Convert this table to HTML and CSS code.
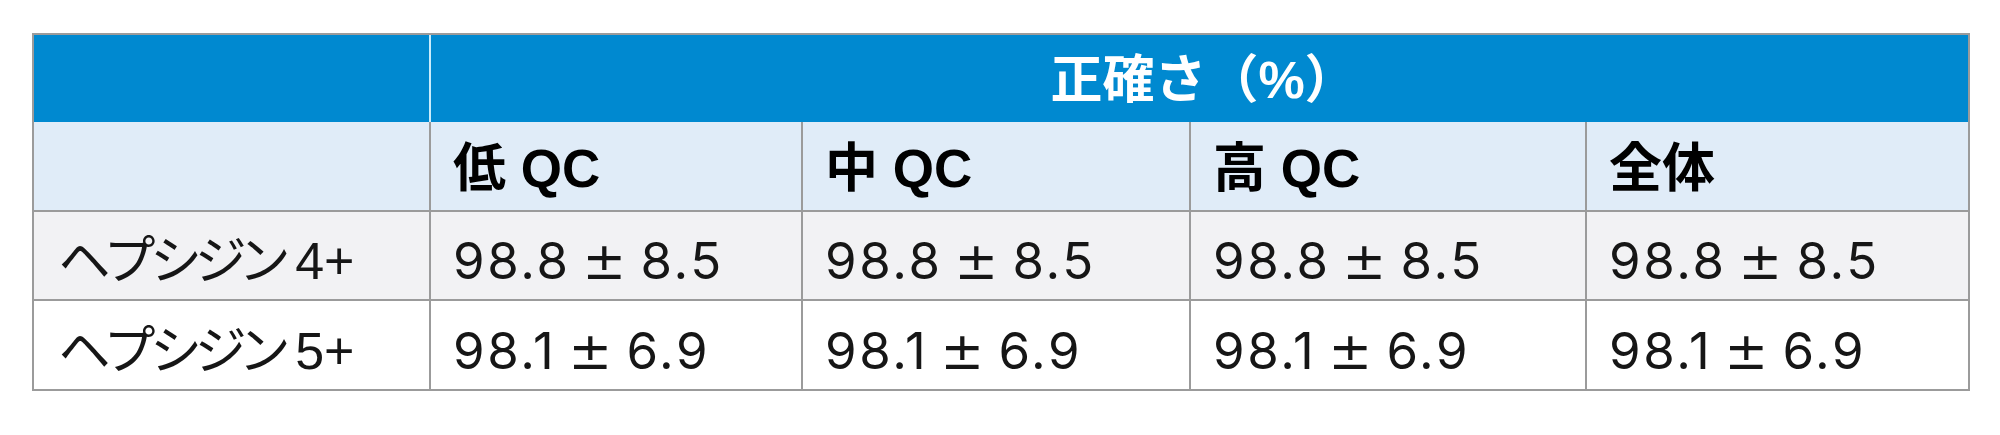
FILE: index.html
```html
<!DOCTYPE html>
<html lang="ja">
<head>
<meta charset="utf-8">
<title>正確さ</title>
<link rel="stylesheet" href="styles.css">
</head>
<body>
<table class="acc">
  <colgroup>
    <col class="c1"><col class="c2"><col class="c3"><col class="c4"><col class="c5">
  </colgroup>
  <thead>
    <tr class="h1">
      <th class="blank"></th>
      <th class="title" colspan="4">正確さ（%）</th>
    </tr>
    <tr class="h2">
      <th></th>
      <th>低 QC</th>
      <th>中 QC</th>
      <th>高 QC</th>
      <th>全体</th>
    </tr>
  </thead>
  <tbody>
    <tr class="r odd">
      <td class="name"><span class="kana">ヘプシジン</span> 4+</td>
      <td>98.8 <span class="pm">±</span> 8.5</td>
      <td>98.8 <span class="pm">±</span> 8.5</td>
      <td>98.8 <span class="pm">±</span> 8.5</td>
      <td>98.8 <span class="pm">±</span> 8.5</td>
    </tr>
    <tr class="r even last">
      <td class="name"><span class="kana">ヘプシジン</span> 5+</td>
      <td>98.1 <span class="pm">±</span> 6.9</td>
      <td>98.1 <span class="pm">±</span> 6.9</td>
      <td>98.1 <span class="pm">±</span> 6.9</td>
      <td>98.1 <span class="pm">±</span> 6.9</td>
    </tr>
  </tbody>
</table>
</body>
</html>
```
FILE: styles.css
```css
html, body {
  margin: 0;
  padding: 0;
  background: #ffffff;
}
body {
  padding: 33px 0 0 32px;
  font-family: "Liberation Sans", "Noto Sans CJK JP", sans-serif;
  color: #111111;
}
.acc {
  border-collapse: separate;
  border-spacing: 0;
  table-layout: fixed;
  width: 1938px;
  border: 2px solid #9b9b9b;
}
.c1 { width: 397px; }
.c2 { width: 372px; }
.c3 { width: 388px; }
.c4 { width: 396px; }
.c5 { width: 381px; }

.acc th, .acc td {
  padding: 0 0 0 22px;
  text-align: left;
  vertical-align: middle;
  border-right: 2px solid #9b9b9b;
  border-bottom: 2px solid #9b9b9b;
  white-space: nowrap;
}
.acc tr > :last-child { border-right: none; }
.acc tr.last > * { border-bottom: none; }

.h1 { height: 87px; }
.h1 th {
  background: #0089d0;
  border-bottom: none;
  color: #ffffff;
}
.h1 .blank { border-right: 2px solid #c9ecfb; }
.h1 .title {
  text-align: center;
  padding: 3px 0 0 8px;
  font-size: 52px;
  line-height: 52px;
  font-weight: 700;
}

.h2 { height: 90px; }
.h2 th {
  background: #e0ecf8;
  padding-top: 5px;
  font-size: 53px;
  line-height: 53px;
  font-weight: 700;
  color: #000000;
}

.r { height: 89px; }
.r.last { height: 88px; }
.r td {
  padding-top: 10px;
  font-family: "Inter", "Liberation Sans", "Noto Sans CJK JP", sans-serif;
  font-size: 51px;
  line-height: 51px;
  font-weight: 400;
  letter-spacing: 2.6px;
  word-spacing: -2px;
  color: #161616;
}
.r.odd td { background: #f2f2f4; }
.r.even td { background: #ffffff; }

.pm {
  font-family: "DejaVu Sans", sans-serif;
  font-size: 52px;
  line-height: 0;
  margin: 0 -3px;
}

.r td.name {
  padding-left: 24px;
  padding-top: 11px;
  font-family: "Liberation Sans", "Noto Sans CJK JP", sans-serif;
  font-size: 52px;
  line-height: 52px;
  letter-spacing: 0;
  word-spacing: -3px;
}
.kana {
  font-family: "Noto Sans CJK JP", sans-serif;
  font-size: 52px;
  line-height: 0;
  font-feature-settings: "palt";
  letter-spacing: -4px;
}
```
